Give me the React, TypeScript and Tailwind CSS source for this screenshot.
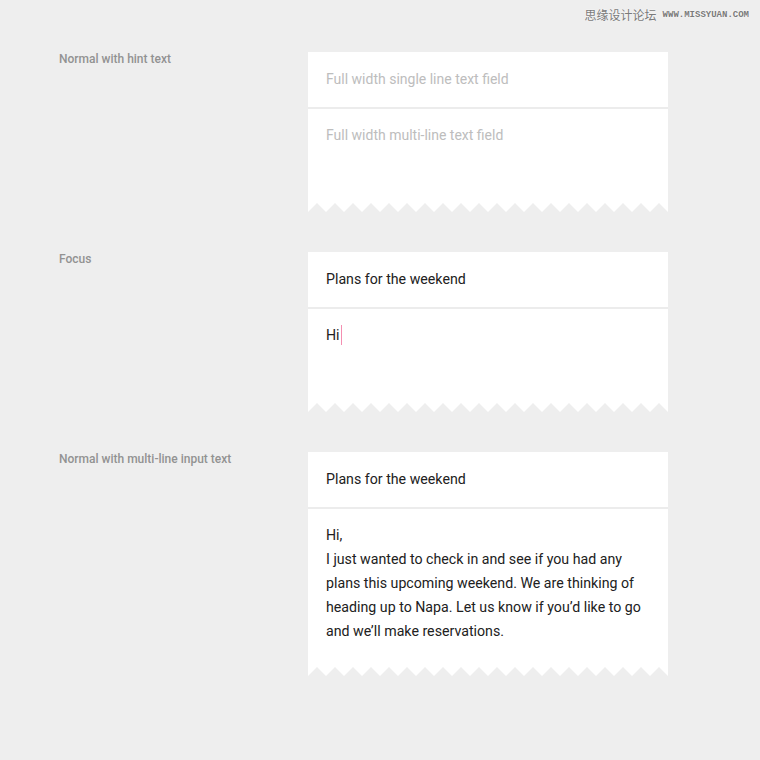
const body = "font-['Roboto','Liberation_Sans',sans-serif]";

function Zigzag() {
  // white teeth along the torn bottom edge, 18px period, 9px deep
  const pts: string[] = ["0,0", "0,9"];
  for (let i = 0; i < 20; i++) {
    pts.push(`${18 * i + 9},0`, `${18 * i + 18},9`);
  }
  pts.push("360,0");
  return (
    <svg width="360" height="9" viewBox="0 0 360 9" className="block">
      <polygon points={pts.join(" ")} fill="#ffffff" />
    </svg>
  );
}

interface FieldCardProps {
  title: React.ReactNode;
  children: React.ReactNode;
  hint?: boolean;
}

function FieldCard({ title, children, hint }: FieldCardProps) {
  const color = hint ? "text-[#bdbdbd] text-[14px]" : "text-[#212121] text-[14.2px]";
  return (
    <div className="w-[360px]">
      <div className={`h-[55px] bg-white px-[18px] flex items-center ${color}`}>
        {title}
      </div>
      <div className="h-[2px] bg-[#ececec]" />
      <div className={`bg-white min-h-[94px] px-[18px] pt-[14px] pb-[24px] leading-[24px] ${color}`}>
        {children}
      </div>
      <Zigzag />
    </div>
  );
}

function Row({ label, children }: { label: string; children: React.ReactNode }) {
  return (
    <div className="flex">
      <div className="w-[249px] text-[12px] leading-[12px] pt-[1px] font-medium text-[#929292]">{label}</div>
      {children}
    </div>
  );
}

export default function App() {
  return (
    <div className={`relative min-h-screen bg-[#eeeeee] ${body}`}>
      {/* watermark */}
      <div className="absolute top-[7px] right-[11px] flex items-center gap-[6px]">
        <span className="text-[12px] leading-[16px] text-[#7a7a7a] font-['Noto_Sans_CJK_SC',sans-serif] [text-shadow:0_0_2px_#fff]">
          思缘设计论坛
        </span>
        <span className="text-[9px] leading-[16px] text-[#7a7a7a] font-['Liberation_Mono',monospace] font-bold [text-shadow:0_0_2px_#fff]">
          WWW.MISSYUAN.COM
        </span>
      </div>

      <div className="pt-[52px] pl-[59px] flex flex-col gap-[40px]">
        <Row label="Normal with hint text">
          <FieldCard hint title="Full width single line text field">
            Full width multi-line text field
          </FieldCard>
        </Row>

        <Row label="Focus">
          <FieldCard title="Plans for the weekend">
            Hi
            <span className="inline-block w-px h-[20px] bg-[#f48fb1] align-[-5px] ml-[1px]" />
          </FieldCard>
        </Row>

        <Row label="Normal with multi-line input text">
          <FieldCard title="Plans for the weekend">
            Hi,
            <br />
            I just wanted to check in and see if you had any plans this upcoming weekend. We are thinking of
            heading up to Napa. Let us know if you’d like to go and we’ll make reservations.
          </FieldCard>
        </Row>
      </div>
    </div>
  );
}
